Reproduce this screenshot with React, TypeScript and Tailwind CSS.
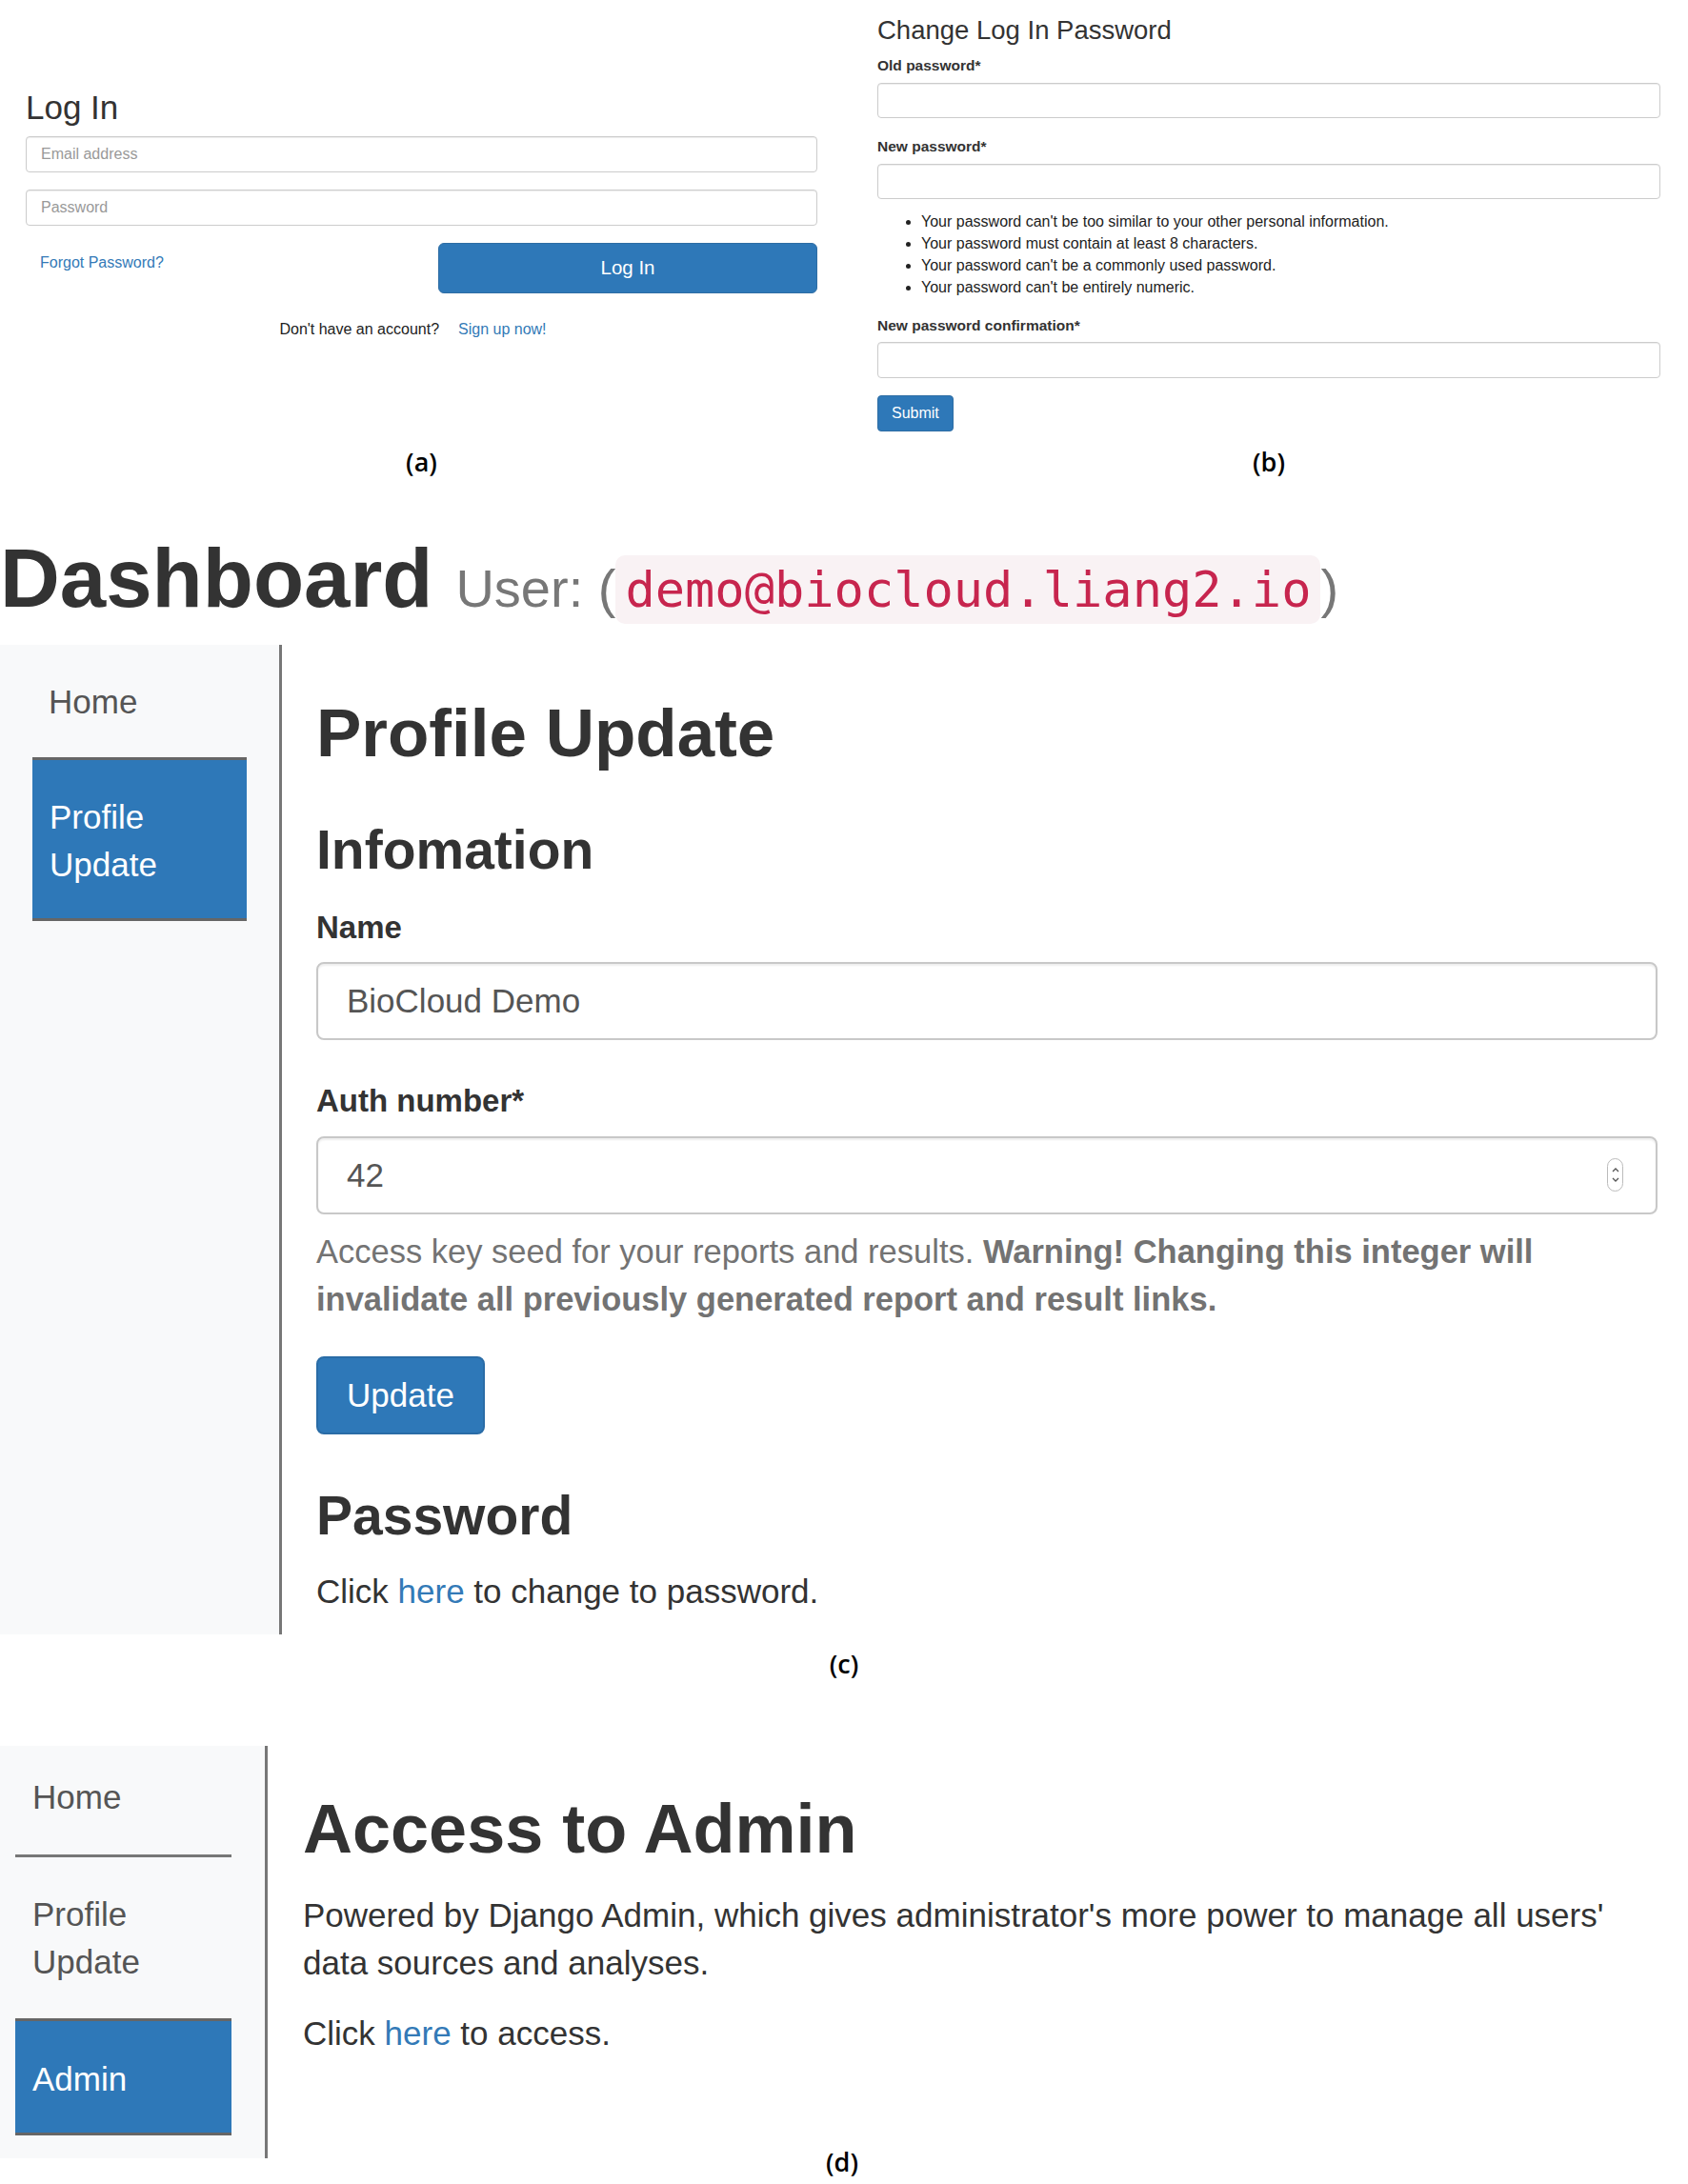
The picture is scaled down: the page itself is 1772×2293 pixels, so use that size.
import React from 'react';

function Caption({ children, className = '' }: { children: React.ReactNode; className?: string }) {
  return (
    <div className={`text-center font-['Open_Sans',sans-serif] font-semibold text-[27px] leading-[34px] text-black ${className}`}>
      {children}
    </div>
  );
}

function SmallInput({ placeholder, className = '' }: { placeholder?: string; className?: string }) {
  return (
    <input
      readOnly
      placeholder={placeholder}
      className={`w-full rounded-[4px] border border-[#ccc] px-[15px] text-[16px] text-[#555] placeholder:text-[#999] shadow-[inset_0_1px_1px_rgba(0,0,0,0.075)] outline-none ${className}`}
    />
  );
}

function BigInput({ value, spinner }: { value: string; spinner?: boolean }) {
  return (
    <div className="relative">
      <input
        readOnly
        defaultValue={value}
        className="h-[82px] w-full rounded-[8px] border-2 border-[#c8c8c8] pl-[30px] text-[35px] text-[#555] shadow-[inset_0_2px_2px_rgba(0,0,0,0.07)] outline-none"
      />
      {spinner && (
        <div className="absolute right-[36px] top-[23px] flex h-[35px] w-[17px] flex-col items-center justify-center gap-[5px] rounded-full border border-[#bbb] bg-white">
          <svg width="8" height="5" viewBox="0 0 8 5">
            <path d="M1 4 L4 1 L7 4" fill="none" stroke="#555" strokeWidth="1.3" />
          </svg>
          <svg width="8" height="5" viewBox="0 0 8 5">
            <path d="M1 1 L4 4 L7 1" fill="none" stroke="#555" strokeWidth="1.3" />
          </svg>
        </div>
      )}
    </div>
  );
}

export default function App() {
  return (
    <div className="h-[2293px] w-[1772px] overflow-hidden bg-white font-['Liberation_Sans',Arial,sans-serif] text-[#333]">
      {/* (a) and (b) */}
      <div className="flex h-[502px] pl-[27px]">
        <div className="flex w-[831px] flex-col">
          <h2 className="mt-[93px] text-[35px] leading-[40px]">Log In</h2>
          <SmallInput placeholder="Email address" className="mt-[10px] h-[38px]" />
          <SmallInput placeholder="Password" className="mt-[18px] h-[38px]" />
          <div className="mt-[18px] flex items-start justify-between">
            <a className="ml-[15px] mt-[10px] text-[16px] leading-[22px] text-[#337ab7]">Forgot Password?</a>
            <button className="h-[53px] w-[398px] rounded-[6px] border border-[#2e6da4] bg-[#2e78b8] text-[20.5px] text-white">
              Log In
            </button>
          </div>
          <p className="mt-[27px] pr-[18px] text-center text-[16px] leading-[22px] text-[#222]">
            Don't have an account?<a className="ml-[20px] text-[#337ab7]">Sign up now!</a>
          </p>
          <Caption className="mt-auto">(a)</Caption>
        </div>

        <div className="ml-[63px] flex w-[822px] flex-col">
          <h3 className="mt-[16px] text-[27.5px] leading-[32px]">Change Log In Password</h3>
          <label className="mt-[11px] text-[15.5px] font-bold leading-[20px]">Old password*</label>
          <SmallInput className="mt-[8px] h-[37px]" />
          <label className="mt-[20px] text-[15.5px] font-bold leading-[20px]">New password*</label>
          <SmallInput className="mt-[8px] h-[37px]" />
          <ul className="mt-[12px] list-disc pl-[46px] text-[16px] leading-[23px] text-[#222]">
            <li>Your password can't be too similar to your other personal information.</li>
            <li>Your password must contain at least 8 characters.</li>
            <li>Your password can't be a commonly used password.</li>
            <li>Your password can't be entirely numeric.</li>
          </ul>
          <label className="mt-[19px] text-[15.5px] font-bold leading-[20px]">New password confirmation*</label>
          <SmallInput className="mt-[7px] h-[38px]" />
          <button className="mt-[18px] h-[38px] self-start rounded-[4px] border border-[#2e6da4] bg-[#2e78b8] px-[14px] text-[16px] text-white">
            Submit
          </button>
          <Caption className="mt-auto">(b)</Caption>
        </div>
      </div>

      {/* (c) */}
      <div className="mt-[60px] flex h-[115px] items-baseline">
        <span className="text-[87px] font-bold leading-[90px]">Dashboard</span>
        <span className="ml-[24px] text-[56px] leading-[60px] text-[#777]">User: (</span>
        <code className="rounded-[10px] bg-[#f9f2f4] px-[10px] py-[10px] font-['DejaVu_Sans_Mono',monospace] text-[52px] leading-[52px] text-[#c7254e]">
          demo@biocloud.liang2.io
        </code>
        <span className="text-[56px] leading-[60px] text-[#777]">)</span>
      </div>

      <div className="flex h-[1039px]">
        <div className="w-[296px] shrink-0 border-r-[3px] border-[#777] bg-[#f8f9fa] pt-[35px]">
          <div className="pl-[51px] text-[35px] leading-[50px] text-[#555]">Home</div>
          <div className="ml-[34px] mt-[33px] w-[225px] border-y-[3px] border-[#666] bg-[#2e78b8] pb-[31px] pl-[18px] pt-[35px] text-[35px] leading-[50px] text-white">
            Profile
            <br />
            Update
          </div>
        </div>
        <div className="flex flex-1 flex-col pl-[36px] pr-[32px]">
          <h1 className="mt-[53px] text-[71px] font-bold leading-[80px]">Profile Update</h1>
          <h2 className="mt-[50px] text-[57px] font-bold leading-[64px]">Infomation</h2>
          <label className="mt-[30px] text-[33px] font-bold leading-[40px]">Name</label>
          <div className="mt-[16px]">
            <BigInput value="BioCloud Demo" />
          </div>
          <label className="mt-[44px] text-[33px] font-bold leading-[40px]">Auth number*</label>
          <div className="mt-[17px]">
            <BigInput value="42" spinner />
          </div>
          <p className="mt-[14px] text-[34.5px] leading-[50px] text-[#737373]">
            Access key seed for your reports and results.{' '}
            <b>
              Warning! Changing this integer will
              <br />
              invalidate all previously generated report and result links.
            </b>
          </p>
          <button className="mt-[35px] h-[82px] w-[177px] self-start rounded-[8px] border-2 border-[#2a6ca6] bg-[#2e78b8] text-[35px] text-white">
            Update
          </button>
          <h2 className="mt-[53px] text-[57px] font-bold leading-[64px]">Password</h2>
          <p className="mt-[23px] text-[35px] leading-[50px]">
            Click <a className="text-[#337ab7]">here</a> to change to password.
          </p>
        </div>
      </div>
      <Caption className="mt-[14px]">(c)</Caption>

      {/* (d) */}
      <div className="mt-[69px] flex h-[433px]">
        <div className="w-[281px] shrink-0 border-r-[3px] border-[#777] bg-[#f8f9fa] pt-[29px]">
          <div className="ml-[16px] w-[227px] border-b-[3px] border-[#777] pb-[35px] pl-[18px] text-[35px] leading-[50px] text-[#555]">
            Home
          </div>
          <div className="ml-[16px] mt-[35px] pl-[18px] text-[35px] leading-[50px] text-[#555]">
            Profile
            <br />
            Update
          </div>
          <div className="ml-[16px] mt-[34px] w-[227px] border-y-[3px] border-[#666] bg-[#2e78b8] pb-[31px] pl-[18px] pt-[36px] text-[35px] leading-[50px] text-white">
            Admin
          </div>
        </div>
        <div className="flex flex-1 flex-col pl-[37px]">
          <h1 className="mt-[47px] text-[72px] font-bold leading-[80px]">Access to Admin</h1>
          <p className="mt-[26px] text-[35px] leading-[50px]">
            Powered by Django Admin, which gives administrator's more power to manage all users'
            <br />
            data sources and analyses.
          </p>
          <p className="mt-[24px] text-[35px] leading-[50px]">
            Click <a className="text-[#337ab7]">here</a> to access.
          </p>
          <Caption className="ml-[516px] mt-[93px] w-[100px]">(d)</Caption>
        </div>
      </div>
    </div>
  );
}
